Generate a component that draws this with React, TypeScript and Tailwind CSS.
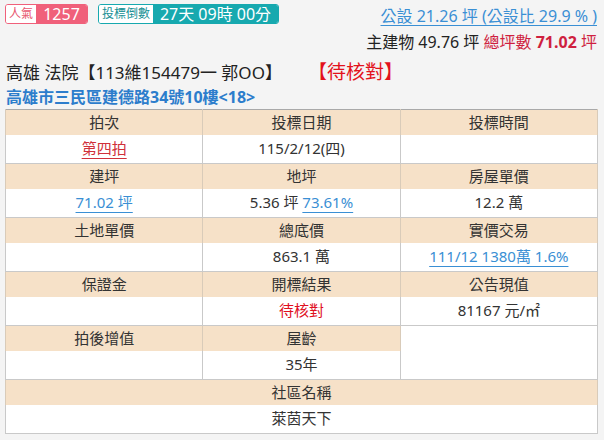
const font = { fontFamily: '"Noto Sans", "Noto Sans CJK TC", sans-serif' }

const Head = ({ children, span }: { children?: React.ReactNode; span?: number }) => (
    <td colSpan={span} className="h-[25px] bg-[#f6e1c8] text-center text-[15px] leading-none text-[#333] border-x border-[#d9cbb9] p-0">
        {children}
    </td>
)

const Cell = ({ children, span }: { children?: React.ReactNode; span?: number }) => (
    <td colSpan={span} className="h-[29px] bg-white text-center text-[15px] leading-none text-[#333] border-x border-b border-[#c9c9c9] p-0">
        {children}
    </td>
)

export default function App() {
    return (
        <div className="w-[604px] h-[440px] bg-[#f4f4f4] overflow-hidden" style={font}>
            <div className="flex justify-between pl-[5px] pr-[7px] pt-[3px]">
                <div className="flex gap-[10px] pt-[1px]">
                    <div className="flex h-[20px] rounded-[3px] overflow-hidden border border-[#f0607a]">
                        <span className="w-[30px] bg-white text-[#e8566f] text-[12px] flex items-center justify-center">人氣</span>
                        <span className="w-[51px] bg-[#f0607a] text-white text-[16px] flex items-center justify-center">1257</span>
                    </div>
                    <div className="flex h-[20px] rounded-[3px] overflow-hidden border border-[#17a9af]">
                        <span className="w-[54px] bg-white text-[#168f94] text-[12px] flex items-center justify-center">投標倒數</span>
                        <span className="w-[125px] bg-[#17a9af] text-white text-[16px] flex items-center justify-center">27天 09時 00分</span>
                    </div>
                </div>
                <div className="flex flex-col items-end">
                    <span className="text-[16px] leading-[26px] text-[#3a8fd4] underline underline-offset-[3px] decoration-[#3a8fd4]">公設 21.26 坪 (公設比 29.9 % )</span>
                    <span className="text-[16px] leading-[26px] text-[#222]">
                        主建物 49.76 坪 <span className="text-[#cf1f3f]">總坪數 <b>71.02</b> 坪</span>
                    </span>
                </div>
            </div>
            <div className="px-[6px] pt-[4px]">
                <div className="flex items-baseline text-[17px] leading-[26px] text-[#222]">
                    <span>高雄 法院【113維154479一 郭OO】</span>
                    <span className="ml-[26px] text-[19px] text-[#e3121c]">【待核對】</span>
                </div>
                <div className="text-[16px] leading-[22px] font-bold text-[#2c7dcc]">高雄市三民區建德路34號10樓&lt;18&gt;</div>
            </div>
            <div className="px-[5px] pt-[1px]">
                <table className="w-[593px] border-collapse border border-[#a9a9a9] table-fixed">
                    <tbody>
                        <tr><Head>拍次</Head><Head>投標日期</Head><Head>投標時間</Head></tr>
                        <tr>
                            <Cell><span className="text-[#d0303a] underline underline-offset-4">第四拍</span></Cell>
                            <Cell>115/2/12(四)</Cell>
                            <Cell />
                        </tr>
                        <tr><Head>建坪</Head><Head>地坪</Head><Head>房屋單價</Head></tr>
                        <tr>
                            <Cell><span className="text-[#3a8fd4] underline underline-offset-4">71.02 坪</span></Cell>
                            <Cell>5.36 坪 <span className="text-[#3a8fd4] underline underline-offset-4">73.61%</span></Cell>
                            <Cell>12.2 萬</Cell>
                        </tr>
                        <tr><Head>土地單價</Head><Head>總底價</Head><Head>實價交易</Head></tr>
                        <tr>
                            <Cell />
                            <Cell>863.1 萬</Cell>
                            <Cell><span className="text-[#3a8fd4] underline underline-offset-4">111/12 1380萬 1.6%</span></Cell>
                        </tr>
                        <tr><Head>保證金</Head><Head>開標結果</Head><Head>公告現值</Head></tr>
                        <tr>
                            <Cell />
                            <Cell><span className="text-[#e0101e]">待核對</span></Cell>
                            <Cell>81167 元/㎡</Cell>
                        </tr>
                        <tr>
                            <Head>拍後增值</Head>
                            <Head>屋齡</Head>
                            <td rowSpan={2} className="bg-white border-x border-b border-[#c9c9c9] p-0" />
                        </tr>
                        <tr>
                            <Cell />
                            <Cell>35年</Cell>
                        </tr>
                        <tr><Head span={3}>社區名稱</Head></tr>
                        <tr><Cell span={3}>萊茵天下</Cell></tr>
                    </tbody>
                </table>
            </div>
        </div>
    )
}
